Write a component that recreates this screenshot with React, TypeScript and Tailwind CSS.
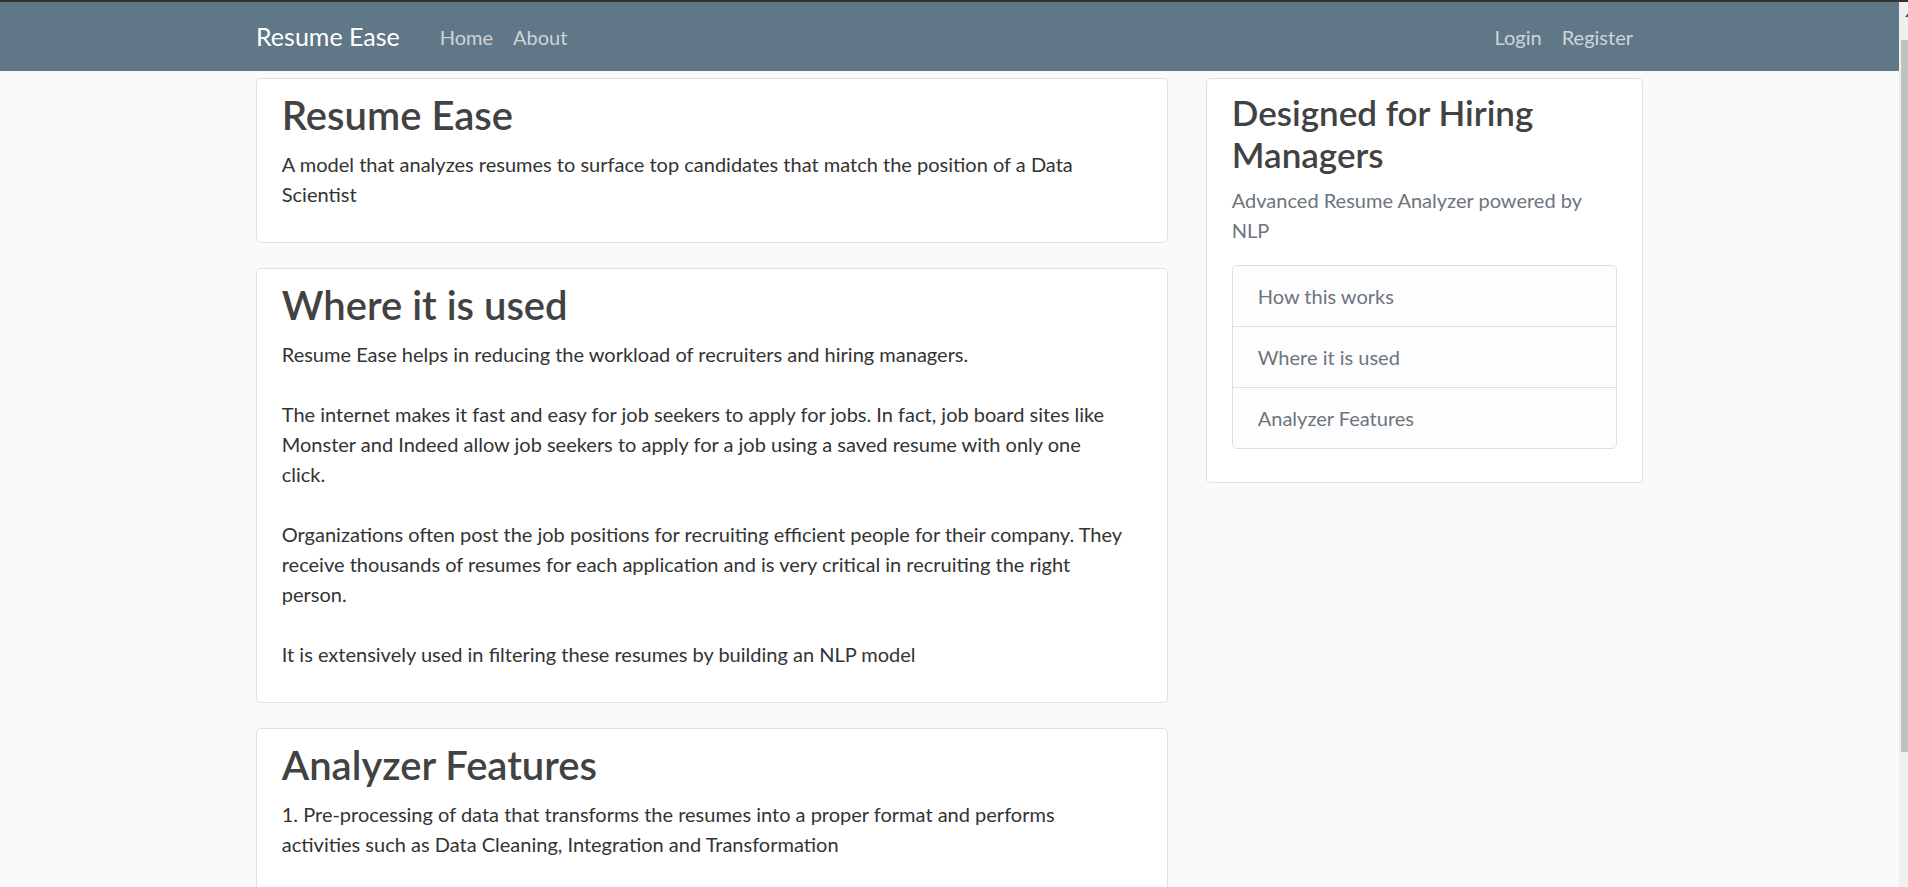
import React from "react";

const font = { fontFamily: "Lato, 'Noto Sans', sans-serif" };

function NavLink({ children }: { children: React.ReactNode }) {
  return <a className="text-[20px] leading-[30px] text-white/70">{children}</a>;
}

function Card({ title, children }: { title: string; children: React.ReactNode }) {
  return (
    <section className="rounded-[5px] border border-[#dfdfdf] bg-white px-[25px] pt-[12px] pb-[33px]">
      <h1 className="mb-[10px] text-[40px] leading-[48px] font-semibold text-[#424242]">{title}</h1>
      <p className="whitespace-nowrap text-[20px] leading-[30px] text-[#333]">{children}</p>
    </section>
  );
}

export default function App() {
  return (
    <div className="flex h-[887px] flex-col overflow-hidden bg-[#fafafa]" style={font}>
      <div className="h-[2px] shrink-0 bg-[#333]" />
      <div className="flex min-h-0 flex-1">
        <div className="flex min-w-0 flex-1 flex-col">
          <nav className="h-[69px] shrink-0 bg-[#607787]">
            <div className="mx-auto flex h-full w-[1425px] items-center px-[19px]">
              <span className="text-[25px] leading-[37px] text-white">Resume Ease</span>
              <div className="ml-[40px] flex gap-[20px]">
                <NavLink>Home</NavLink>
                <NavLink>About</NavLink>
              </div>
              <div className="ml-auto flex gap-[20px] pr-[10px]">
                <NavLink>Login</NavLink>
                <NavLink>Register</NavLink>
              </div>
            </div>
          </nav>

          <main className="mx-auto mt-[7px] grid w-[1425px] grid-cols-[912.5px_437.5px] items-start gap-x-[37.5px] px-[18.75px]">
            <div className="flex flex-col gap-[25px]">
              <Card title="Resume Ease">
                A model that analyzes resumes to surface top candidates that match the position of a Data
                <br />
                Scientist
              </Card>
              <Card title="Where it is used">
                Resume Ease helps in reducing the workload of recruiters and hiring managers.
                <br />
                <br />
                The internet makes it fast and easy for job seekers to apply for jobs. In fact, job board sites like
                <br />
                Monster and Indeed allow job seekers to apply for a job using a saved resume with only one
                <br />
                click.
                <br />
                <br />
                Organizations often post the job positions for recruiting efficient people for their company. They
                <br />
                receive thousands of resumes for each application and is very critical in recruiting the right
                <br />
                person.
                <br />
                <br />
                It is extensively used in filtering these resumes by building an NLP model
              </Card>
              <Card title="Analyzer Features">
                1. Pre-processing of data that transforms the resumes into a proper format and performs
                <br />
                activities such as Data Cleaning, Integration and Transformation
              </Card>
            </div>

            <aside className="rounded-[5px] border border-[#dfdfdf] bg-white px-[25px] pt-[12px] pb-[33px]">
              <h3 className="mb-[10px] text-[35px] leading-[42px] font-semibold text-[#424242]">
                Designed for Hiring Managers
              </h3>
              <p className="mb-[20px] whitespace-nowrap text-[20px] leading-[30px] text-[#6c757d]">
                Advanced Resume Analyzer powered by
                <br />
                NLP
              </p>
              <ul className="overflow-hidden rounded-[5px] border border-[#dfdfdf]">
                {["How this works", "Where it is used", "Analyzer Features"].map((item, i) => (
                  <li
                    key={item}
                    className={`bg-[#fdfdfd] px-[25px] py-[15px] text-[20px] leading-[30px] text-[#6c757d] ${
                      i > 0 ? "border-t border-[#dfdfdf]" : ""
                    }`}
                  >
                    {item}
                  </li>
                ))}
              </ul>
            </aside>
          </main>
        </div>

        {/* window scrollbar */}
        <div className="flex w-[9px] shrink-0 flex-col bg-[#f0f0f0] pl-[2px]">
          <div className="h-[38px] overflow-hidden pt-[10px] pl-[4px]">
            <svg width="8" height="5" viewBox="0 0 8 5">
              <path d="M0 5 L4 0 L8 5 Z" fill="#505050" />
            </svg>
          </div>
          <div className="h-[712px] bg-[#c1c1c1]" />
        </div>
      </div>
    </div>
  );
}
